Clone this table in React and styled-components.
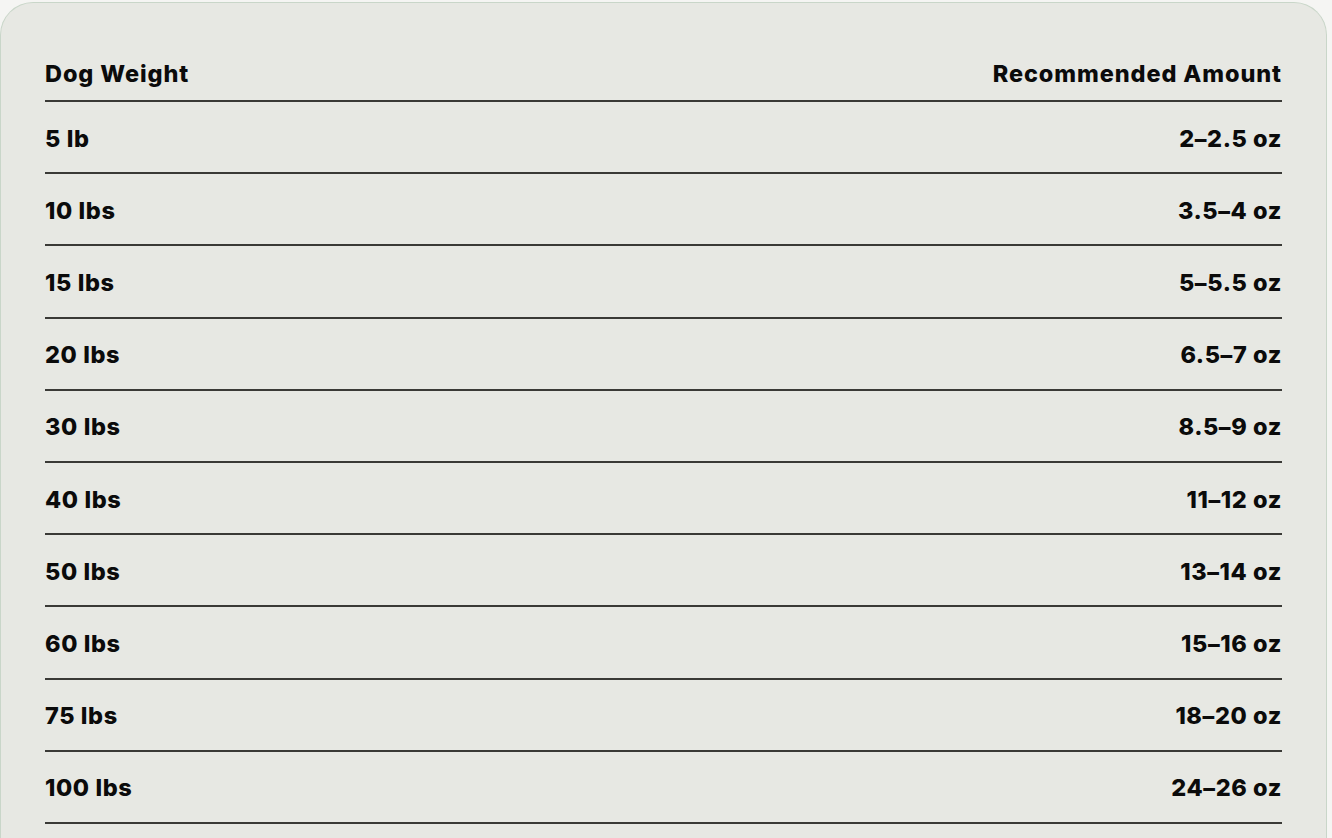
import React from 'react'
import styled, { createGlobalStyle } from 'styled-components'

const rows = [
    ['5 lb', '2-2.5 oz'],
    ['10 lbs', '3.5-4 oz'],
    ['15 lbs', '5-5.5 oz'],
    ['20 lbs', '6.5-7 oz'],
    ['30 lbs', '8.5-9 oz'],
    ['40 lbs', '11-12 oz'],
    ['50 lbs', '13-14 oz'],
    ['60 lbs', '15-16 oz'],
    ['75 lbs', '18-20 oz'],
    ['100 lbs', '24-26 oz'],
]

const App = () => {
    return (
        <>
            <GlobalStyle />
            <Card>
                <HeaderRow>
                    <Cell $head>Dog Weight</Cell>
                    <Cell $head $right>Recommended Amount</Cell>
                </HeaderRow>
                {rows.map(([weight, amount]) => (
                    <Row key={weight}>
                        <Cell>{weight}</Cell>
                        <Cell $right>{amount.replace('-', '\u2013')}</Cell>
                    </Row>
                ))}
            </Card>
        </>
    )
}

export default App

const GlobalStyle = createGlobalStyle`
    body {
        margin: 0;
        background: #f5f5f3;
        font-family: "Inter", "Liberation Sans", sans-serif;
    }
`

const Card = styled.div`
    margin-top: 2px;
    width: 1327px;
    min-height: 900px;
    box-sizing: border-box;
    padding: 43px 44px 0;
    background: #e7e8e3;
    border: 1px solid #c9d6c9;
    border-bottom: none;
    border-radius: 33px 33px 0 0;
`

const HeaderRow = styled.div`
    display: flex;
    justify-content: space-between;
    align-items: center;
    height: 54px;
    border-bottom: 2px solid #3a3a36;
`

const Row = styled.div`
    display: flex;
    justify-content: space-between;
    align-items: center;
    height: 70.2px;
    border-bottom: 2px solid #3a3a36;
`

const Cell = styled.div`
    padding-top: ${props => (props.$head ? '0' : '2px')};
    font-size: 23.5px;
    font-weight: 800;
    color: #0b0b0b;
    letter-spacing: ${props => (props.$head ? '0.9px' : '0.6px')};
    text-align: ${props => (props.$right ? 'right' : 'left')};
`
